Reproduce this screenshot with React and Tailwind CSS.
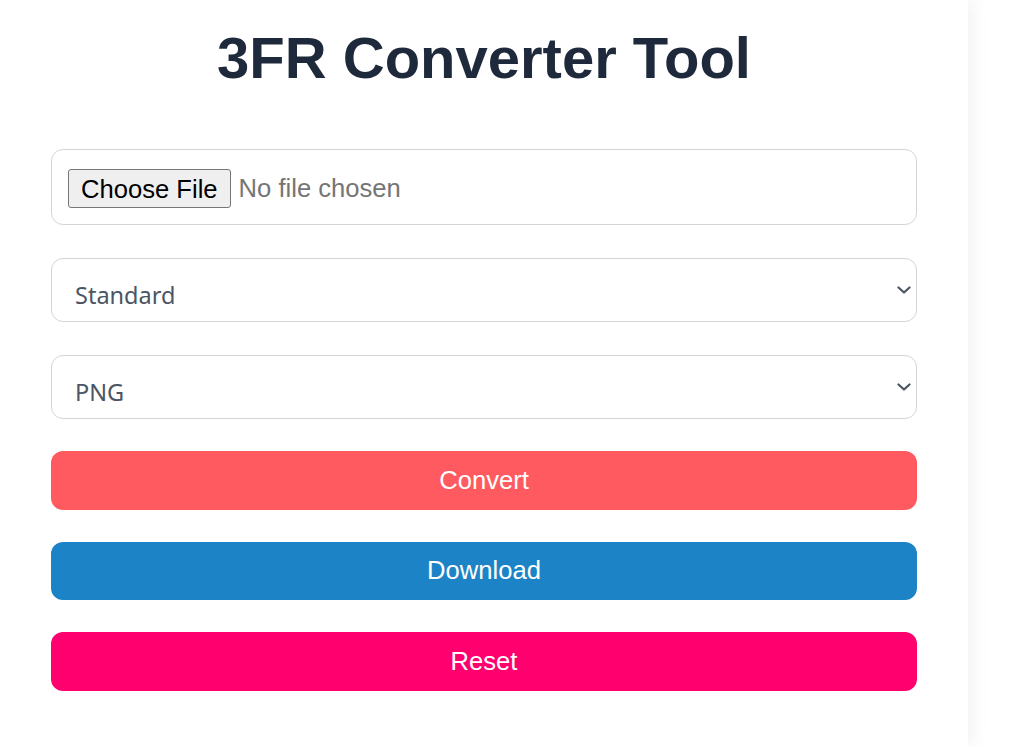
import React from "react";

function Chevron() {
  return (
    <svg
      width="14"
      height="8"
      viewBox="0 0 14 8"
      fill="none"
      className="pointer-events-none absolute right-[6px] top-1/2 -translate-y-1/2"
    >
      <path d="M1.5 1.5 L7 6.5 L12.5 1.5" stroke="#4b5563" strokeWidth="2.2" strokeLinecap="round" strokeLinejoin="round" />
    </svg>
  );
}

function Select({ value, options }) {
  return (
    <div className="relative">
      <select
        defaultValue={value}
        className="h-[64px] w-full appearance-none rounded-[12px] border border-[#d4d4d8] bg-white pl-[23px] pt-[11px] text-[23.5px] text-[#4b5563] outline-none [font-family:'Noto_Sans',sans-serif]"
      >
        {options.map((o) => (
          <option key={o}>{o}</option>
        ))}
      </select>
      <Chevron />
    </div>
  );
}

export default function App() {
  return (
    <div className="flex min-h-screen bg-white">
      <div className="w-[968px] min-h-[747px] bg-white px-[51px] pt-[25px] shadow-[4px_0_18px_rgba(0,0,0,0.06)]">
        <h1 className="text-center text-[58px] font-bold leading-[1.15] text-[#1e293b] [font-family:'Liberation_Sans',Arial,sans-serif]">
          3FR Converter Tool
        </h1>
        <div className="mt-[57px] flex flex-col">
          <label className="flex h-[76px] cursor-pointer items-center rounded-[12px] border border-[#d4d4d8] bg-white pl-[16px] pt-[4px] [font-family:'Liberation_Sans',Arial,sans-serif]">
            <input type="file" className="hidden" />
            <span className="flex h-[39px] items-center rounded-[3px] border border-[#767676] bg-[#efefef] px-[12px] text-[25.6px] text-black">
              Choose File
            </span>
            <span className="ml-[8px] text-[25.6px] text-[#757575]">No file chosen</span>
          </label>
          <div className="mt-[33px]">
            <Select value="Standard" options={["Standard", "High Quality", "Low Quality"]} />
          </div>
          <div className="mt-[33px]">
            <Select value="PNG" options={["PNG", "JPG", "TIFF", "WEBP"]} />
          </div>
          <div className="mt-[32px] flex flex-col gap-[32px] [font-family:'Liberation_Sans',Arial,sans-serif]">
            <button className="h-[59px] rounded-[12px] bg-[#ff5a5f] text-[25.6px] text-white">Convert</button>
            <button className="h-[58px] rounded-[12px] bg-[#1c84c6] text-[25.6px] text-white">Download</button>
            <button className="h-[59px] rounded-[12px] bg-[#ff006e] text-[25.6px] text-white">Reset</button>
          </div>
        </div>
      </div>
    </div>
  );
}
